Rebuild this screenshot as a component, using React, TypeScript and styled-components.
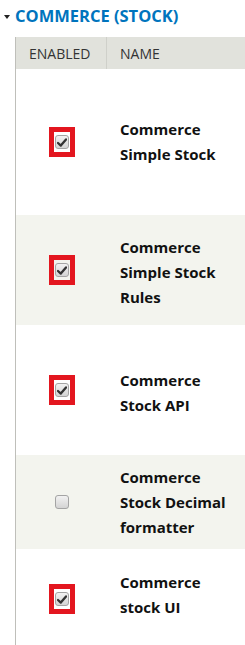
import styled, { createGlobalStyle } from "styled-components";

const GlobalStyle = createGlobalStyle`
  body {
    margin: 0;
    background: #ffffff;
    font-family: "Open Sans", "DejaVu Sans", sans-serif;
    color: #222;
  }
`;

const Page = styled.div`
  width: 245px;
  height: 645px;
  overflow: hidden;
`;

const Title = styled.div`
  display: flex;
  align-items: center;
  gap: 5px;
  height: 31px;
  padding-left: 4px;
  color: #0074bd;
  font-weight: 700;
  font-size: 16.5px;
`;

const Caret = styled.span`
  width: 0;
  height: 0;
  border-left: 3.5px solid transparent;
  border-right: 3.5px solid transparent;
  border-top: 4px solid #222;
  margin-top: 2px;
`;

const Table = styled.div`
  margin-left: 15px;
  margin-top: 6px;
  width: 300px;
  border-left: 1px solid #bfbfba;
`;

const HeaderRow = styled.div`
  display: flex;
  height: 32px;
  background: #e1e2dc;
  font-size: 14px;
  color: #333;
`;

const HeadCell = styled.div<{ $w?: number; $divider?: boolean }>`
  display: flex;
  align-items: center;
  width: ${(p) => (p.$w ? `${p.$w}px` : "auto")};
  flex: ${(p) => (p.$w ? "none" : "1")};
  padding-left: 13px;
  box-sizing: border-box;
  border-right: ${(p) => (p.$divider ? "1px solid #cfd0ca" : "none")};
`;

const Row = styled.div<{ $h: number; $striped?: boolean }>`
  display: flex;
  height: ${(p) => p.$h}px;
  background: ${(p) => (p.$striped ? "#f3f4ee" : "#ffffff")};
`;

const CheckCell = styled.div`
  width: 91px;
  flex: none;
  display: flex;
  align-items: center;
  justify-content: center;
`;

const NameCell = styled.div<{ $shift: number }>`
  flex: 1;
  display: flex;
  align-items: center;
  padding-left: 13px;
  padding-top: ${(p) => Math.max(p.$shift, 0)}px;
  padding-bottom: ${(p) => Math.max(-p.$shift, 0)}px;
  font-size: 15px;
  font-weight: 700;
  line-height: 25px;
  color: #111;
`;

const Highlight = styled.div`
  border: 5px solid #e3161f;
  padding: 3px 1px;
  display: flex;
  margin-left: 1px;
`;

const Box = styled.span`
  width: 14px;
  height: 14px;
  box-sizing: border-box;
  border: 1px solid #a4a4a4;
  border-radius: 3px;
  background: linear-gradient(#f2f2f2, #d4d4d4);
  display: flex;
  align-items: center;
  justify-content: center;
`;

const Check = () => (
  <svg width="10" height="9" viewBox="0 0 10 9">
    <path d="M1 5 L3.8 7.6 L9 1.4" fill="none" stroke="#333" strokeWidth="2.3" strokeLinecap="round" strokeLinejoin="round" />
  </svg>
);

const modules = [
  { name: ["Commerce", "Simple Stock"], h: 146, on: true, shift: 0 },
  { name: ["Commerce", "Simple Stock", "Rules"], h: 110, on: true, shift: 5 },
  { name: ["Commerce", "Stock API"], h: 130, on: true, shift: 5 },
  { name: ["Commerce", "Stock Decimal", "formatter"], h: 94, on: false, shift: 0 },
  { name: ["Commerce", "stock UI"], h: 100, on: true, shift: -8 },
];

export default function App() {
  return (
    <Page>
      <GlobalStyle />
      <Title>
        <Caret />
        COMMERCE (STOCK)
      </Title>
      <Table>
        <HeaderRow>
          <HeadCell $w={91} $divider>ENABLED</HeadCell>
          <HeadCell>NAME</HeadCell>
        </HeaderRow>
        {modules.map((m, i) => (
          <Row key={i} $h={m.h} $striped={i % 2 === 1}>
            <CheckCell>
              {m.on ? (
                <Highlight>
                  <Box>
                    <Check />
                  </Box>
                </Highlight>
              ) : (
                <Box />
              )}
            </CheckCell>
            <NameCell $shift={m.shift}>
              <div>
                {m.name.map((l, j) => (
                  <div key={j}>{l}</div>
                ))}
              </div>
            </NameCell>
          </Row>
        ))}
      </Table>
    </Page>
  );
}
